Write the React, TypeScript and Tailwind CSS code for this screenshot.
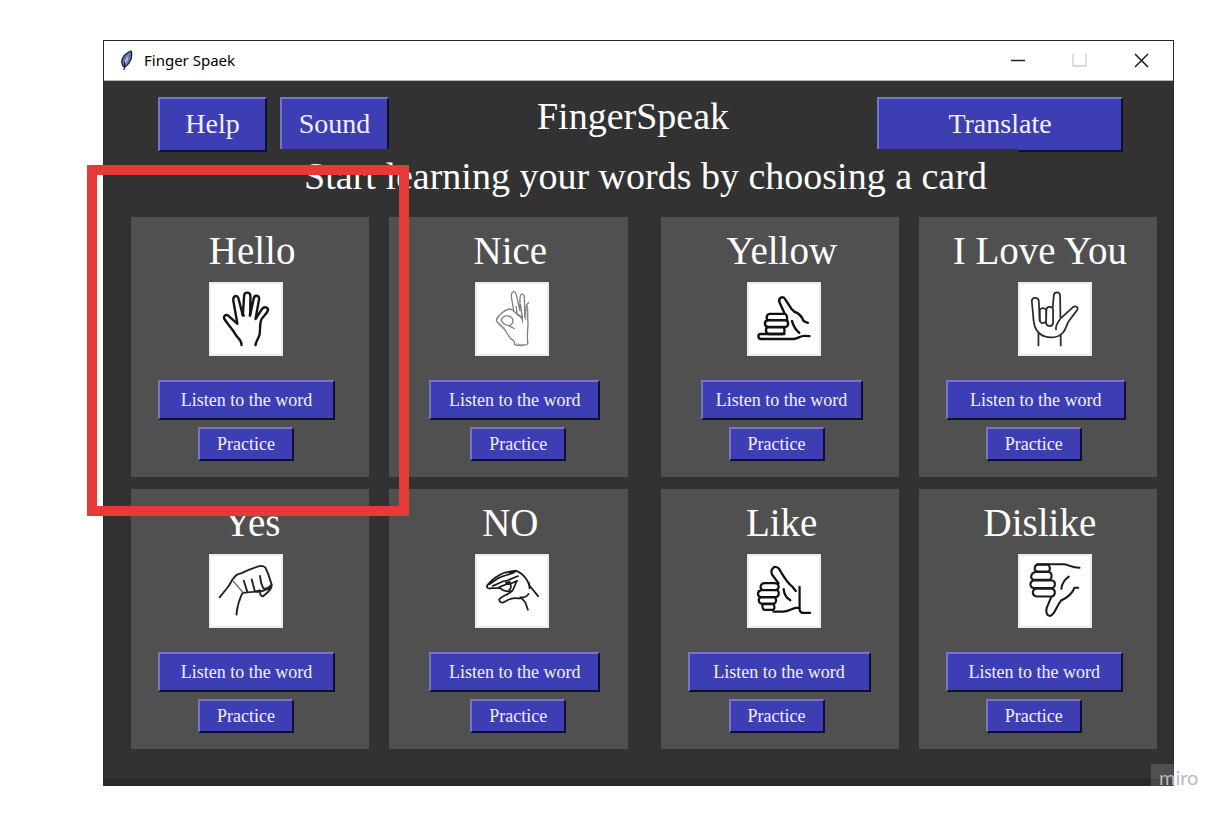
import type { ReactNode } from "react";

type CardData = {
  word: string;
  art: ReactNode;
  artBox: string;
  artClass: string;
  listenClass: string;
  practiceClass: string;
};

const raised =
  "border-2 border-t-[#7575cc] border-l-[#7575cc] border-r-[#10102e] border-b-[#10102e] bg-[#3e3eb4] text-[#f1f1ff]";

const hello: CardData = {
  word: "Hello",
  artBox: "28 20 220 220",
  artClass: "ml-[78px]",
  listenClass: "ml-[27px] w-[177px]",
  practiceClass: "ml-[67px]",
  art: (
    <g stroke="#141414" strokeWidth="7.5">
      <path d="M124 212 C124 199 119 195 112 188 C104 180 103 172 93 161 C85 150 75 138 70 130 C66 120 75 114 83 120 L111 145 L98 72 C97 57 109 53 114 64 L128 119 L132 58 C132 44 151 43 152 58 L151 119 L162 66 C165 53 181 54 179 68 L168 130 L188 99 C198 87 211 96 206 105 C201 117 190 122 185 135 C181 148 183 163 181 177 C179 190 169 199 168 212" />
      <path d="M126 112 L131 119 M151 111 L150 119" />
    </g>
  ),
};

const nice: CardData = {
  word: "Nice",
  artBox: "25 20 220 220",
  artClass: "ml-[86px]",
  listenClass: "ml-[40px] w-[171px]",
  practiceClass: "ml-[81px]",
  art: (
    <g stroke="#7c7c7c" strokeWidth="4">
      <path d="M143 210 C145 197 139 199 130 190 C121 181 118 168 108 159 C98 152 92 144 86 136 C85 126 97 119 102 112 C110 103 119 100 128 98 L140 104 L133 59 C132 43 144 39 148 52 L160 104 L160 65 C161 47 173 49 174 64 L175 126 L181 85 L187 79 M182 88 C187 102 183 122 185 139 C187 157 180 175 185 208 C174 216 154 215 143 210" />
      <path d="M101 133 C107 117 127 117 136 128 C141 139 135 150 124 151 C112 149 105 142 101 133 M124 151 L142 160 M140 104 L155 119 C165 124 169 130 168 140 M148 90 L151 114 L164 122 M162 85 L168 129" />
      <path d="M91 139 L113 161 M179 105 L183 96 M148 209 L179 211 M179 112 L178 132" stroke="#aaa" />
    </g>
  ),
};

const yellow: CardData = {
  word: "Yellow",
  artBox: "26 20 220 220",
  artClass: "ml-[86px]",
  listenClass: "ml-[40px] w-[162px]",
  practiceClass: "ml-[68px]",
  art: (
    <g stroke="#111" strokeWidth="7.5">
      <path d="M138 113 L122 78 C117 63 133 56 140 68 L160 99 L170 108 C184 112 192 122 198 137 L211 142" />
      <path d="M91 114 H139 Q146 115 146 134 H88 C79 133 79 115 91 114 Z M85 134 H142 C151 136 151 153 142 155 H85 C73 153 73 136 85 134 Z M85 156 H136 Q141 176 131 177 H88 C77 175 77 158 85 156 Z" />
      <path d="M137 177 H62 C53 178 53 193 65 193 H163 C178 193 188 182 200 183 L216 184 M161 136 C166 154 173 165 184 173" />
    </g>
  ),
};

const love: CardData = {
  word: "I Love You",
  artBox: "24 20 220 220",
  artClass: "ml-[99px]",
  listenClass: "ml-[27px] w-[180px]",
  practiceClass: "ml-[67px]",
  art: (
    <g stroke="#2b2b2b" strokeWidth="5.5">
      <path d="M82 213 V171 M152 213 V181 M137 163 C135 149 143 139 151 129 L189 94 C200 86 210 94 203 103 L177 137 C171 146 169 163 158 174 C139 193 100 194 79 169 C66 154 66 132 65 114 L61 73 C62 61 81 60 83 73 L86 135 M151 125 L150 58 C150 43 131 42 130 57 L127 93" />
      <path d="M86 101 Q96 91 106 101 V137 Q102 145 91 142 Q86 139 86 134 Z M107 99 C110 89 127 90 128 101 V142 Q126 153 116 152 Q106 151 106 142 Z" />
    </g>
  ),
};

const yes: CardData = {
  ...hello,
  word: "Yes",
  art: (
    <g stroke="#242424" strokeWidth="6">
      <path d="M55 150 L80 119 C93 101 98 84 112 78 L124 74 C149 60 166 56 183 51 Q199 51 202 63 L208 77 L219 111 Q218 124 207 133 L191 147 C183 146 181 139 184 130 M108 204 C110 181 114 163 127 136 L189 130 L217 119" />
      <path d="M131 98 L142 132 M156 94 L165 128 Q172 134 181 128 M182 83 Q184 106 192 121 Q203 127 217 112" />
      <path d="M97 98 L128 134" stroke="#666" strokeWidth="4" />
    </g>
  ),
};

const no: CardData = {
  ...nice,
  word: "NO",
  art: (
    <g stroke="#1c1c1c" strokeWidth="5.5">
      <path d="M217 146 L189 112 L184 99 C173 80 162 71 146 66 L113 72 C91 80 72 94 59 110 C52 119 60 125 72 121 L98 121 C109 132 123 132 135 130 M148 67 C131 81 109 78 90 91 L64 109" />
      <path d="M74 114 C92 110 100 98 120 97 L154 83 M151 98 C143 108 145 121 133 132 C119 143 103 146 95 156 C94 165 103 170 112 164 C125 155 139 151 153 153 L166 153 L177 166 L185 189 M161 150 C171 151 182 147 187 139 M95 118 L119 108 L129 108 C134 116 131 124 126 127 M129 108 L151 98 M189 105 L190 122" />
      <path d="M117 104 L128 103" strokeWidth="8" />
    </g>
  ),
};

const like: CardData = {
  ...yellow,
  word: "Like",
  listenClass: "ml-[27px] w-[183px]",
  art: (
    <g stroke="#111" strokeWidth="7">
      <path d="M119 106 L99 79 C91 61 108 45 121 61 C132 79 144 103 162 116 L173 130 M185 117 V188 Q187 199 197 199 H218 M103 195 H135 C153 194 163 184 173 183 H184 M135 124 C136 140 145 153 156 159" />
      <path d="M74 105 H104 C123 104 124 126 109 127 H70 C59 125 60 107 74 105 Z M64 127 H113 C122 130 122 148 111 149 H63 C51 147 51 130 64 127 Z M64 150 H106 C113 152 113 168 104 170 H66 C54 168 54 152 64 150 Z M70 171 H104 Q109 187 101 189 H75 Q67 188 68 171 Z" />
    </g>
  ),
};

const dislike: CardData = {
  ...love,
  word: "Dislike",
  listenClass: "ml-[27px] w-[177px]",
  art: (
    <g stroke="#1b1b1b" strokeWidth="6.5">
      <path d="M78 46 H159 C174 45 184 57 211 57 M122 149 L108 183 C104 197 109 210 120 208 C135 202 137 179 153 160 C176 149 188 139 195 120 H207 M177 85 C163 95 156 106 154 123" />
      <path d="M80 47 H112 Q122 57 115 69 H79 C67 67 67 50 80 47 Z M73 70 H116 C125 73 126 90 117 95 H66 C55 91 57 73 73 70 Z M67 97 H125 C137 99 137 118 124 121 H68 C53 119 53 100 67 97 Z M74 123 H125 C137 126 136 144 124 147 H77 C61 145 60 127 74 123 Z" />
    </g>
  ),
};

function Card({ card }: { card: CardData }) {
  return (
    <article className="flex flex-col items-start bg-[#505050] pt-[14px] pb-4">
      <h2 className="self-stretch pl-1 text-center text-[39px] leading-10 whitespace-nowrap">{card.word}</h2>
      <svg
        role="img"
        aria-label={card.word}
        viewBox={card.artBox}
        fill="none"
        strokeLinecap="round"
        strokeLinejoin="round"
        className={`mt-[11px] size-[74px] border-2 border-[#ececec] bg-white ${card.artClass}`}
      >
        {card.art}
      </svg>
      <button className={`mt-6 h-10 text-[18px] leading-6 whitespace-nowrap ${raised} ${card.listenClass}`}>
        Listen to the word
      </button>
      <button className={`mt-[7px] h-[34px] w-24 text-[18px] leading-6 ${raised} ${card.practiceClass}`}>
        Practice
      </button>
    </article>
  );
}

function CardGroup({ cards }: { cards: CardData[] }) {
  return (
    <div className="grid grid-cols-2 gap-x-5 gap-y-3">
      {cards.map((card) => (
        <Card key={card.word} card={card} />
      ))}
    </div>
  );
}

function TitleBar() {
  return (
    <header className="flex h-10 items-center border-b border-[#b5b5b5] bg-white pr-6 pl-4 text-black">
      <svg viewBox="0 0 14 22" className="mr-[10px] h-[22px] w-[14px]" aria-hidden="true">
        <path d="M3 16 C0 11 3 4 11 1 C13 7 10 14 5 17 Z" fill="#6478b4" stroke="#171b29" strokeWidth="1.3" />
        <path d="M4 20 L5 12 L9 5" fill="none" stroke="#111827" strokeWidth="1.2" />
        <path d="M5 10 L9 4 L8 10 L5 14" fill="#a9bad9" />
      </svg>
      <span className="flex-1 pb-0.5 font-['Noto_Sans','Open_Sans',sans-serif] text-[15px] leading-5">
        Finger Spaek
      </span>
      <div className="flex items-center gap-[47px]">
        <button aria-label="Minimize" className="size-[15px]">
          <svg viewBox="0 0 15 15" fill="none" stroke="#222" strokeWidth="1.5">
            <path d="M1 7.5H15" />
          </svg>
        </button>
        <button aria-label="Maximize" className="size-[15px]" disabled>
          <svg viewBox="0 0 15 15" fill="none" stroke="#cdcdcd" strokeWidth="1.3">
            <path d="M1 1V13H14V1" />
          </svg>
        </button>
        <button aria-label="Close" className="size-[15px]">
          <svg viewBox="0 0 15 15" fill="none" stroke="#1a1a1a" strokeWidth="1.5">
            <path d="M1 1L14 14M14 1L1 14" />
          </svg>
        </button>
      </div>
    </header>
  );
}

export default function App() {
  return (
    <div className="min-h-screen bg-white pt-10 pr-[54px] pl-[103px] font-['Liberation_Serif',serif] text-white">
      <div className="relative border border-[#292929] bg-[#323232]">
        <TitleBar />
        <main>
          <div className="flex items-start pt-4 pr-[50px] pl-[54px]">
            <button className={`h-[55px] w-[109px] pb-0.5 text-[28px] leading-8 ${raised}`}>Help</button>
            <button className={`ml-[13px] h-[55px] w-[109px] pb-0.5 text-[28px] leading-8 ${raised}`}>Sound</button>
            <h1 className="flex-1 text-center text-[38px] leading-[38px]">FingerSpeak</h1>
            <button className={`h-[55px] w-[246px] pb-0.5 text-[28px] leading-8 ${raised}`}>Translate</button>
          </div>
          <div className="relative -mt-[3px] flex justify-center pl-[14px]">
            <p className="bg-[#323232] px-8 pt-[7px] text-[38px] leading-10 whitespace-nowrap">
              Start learning your words by choosing a card
            </p>
          </div>
          <section aria-label="Word cards" className="mt-[21px] grid grid-cols-2 gap-x-[33px] pr-4 pb-[30px] pl-[27px]">
            <CardGroup cards={[hello, nice, yes, no]} />
            <CardGroup cards={[yellow, love, like, dislike]} />
          </section>
        </main>
        <div className="h-[6px] bg-[#292929]" />
        <div
          aria-hidden="true"
          className="pointer-events-none absolute top-[124px] -left-[17px] h-[351px] w-[322px] border-10 border-[#e63a38]"
        />
        <div className="absolute -right-[27px] -bottom-px flex h-[22px] w-[49px] items-end bg-white/15 pl-2 font-[Lato,sans-serif] text-[20px] leading-[18px] text-[#b9b9c8]">
          miro
        </div>
      </div>
    </div>
  );
}
